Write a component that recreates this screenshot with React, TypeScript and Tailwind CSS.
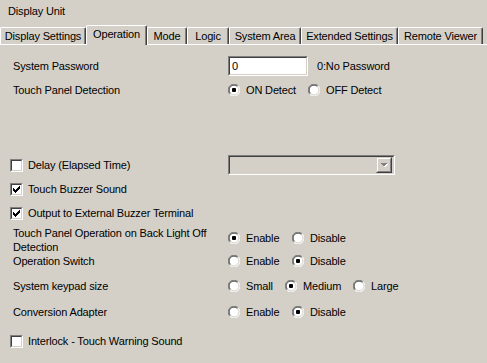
import React from 'react';

const tabs = [
  { label: 'Display Settings', w: 'w-[86px]' },
  { label: 'Operation', w: 'w-[61px]', active: true },
  { label: 'Mode', w: 'w-[40px]' },
  { label: 'Logic', w: 'w-[42px]' },
  { label: 'System Area', w: 'w-[72px]' },
  { label: 'Extended Settings', w: 'w-[97px]' },
  { label: 'Remote Viewer', w: 'w-[85px]' },
];

// classic sunken 3D frame
function Sunken({ className, inner, children }: { className: string; inner: string; children?: React.ReactNode }) {
  return (
    <div className={`border border-t-[#808080] border-l-[#808080] border-b-white border-r-white ${className}`}>
      <div className={`h-full w-full border border-t-[#404040] border-l-[#404040] border-b-[#d4d0c8] border-r-[#d4d0c8] ${inner}`}>
        {children}
      </div>
    </div>
  );
}

function Check({ checked, label }: { checked?: boolean; label: string }) {
  return (
    <div className="flex h-[13px] items-center">
      <Sunken className="h-[13px] w-[13px] shrink-0" inner="bg-white flex items-center justify-center">
        {checked && (
          <svg width="7" height="7" viewBox="0 0 7 7" shapeRendering="crispEdges">
            <path d="M0 2 L2 4 L6 0 L7 0 L7 3 L2 7 L0 5 Z" fill="#000" />
          </svg>
        )}
      </Sunken>
      <span className="ml-[5px]">{label}</span>
    </div>
  );
}

function Radio({ checked, label, w }: { checked?: boolean; label: string; w: string }) {
  return (
    <div className={`flex h-[12px] items-center ${w}`}>
      <svg width="12" height="12" viewBox="0 0 12 12" className="shrink-0">
        <circle cx="6" cy="6" r="5.5" fill="#fff" />
        <path d="M1.8 10.2 A5.5 5.5 0 0 1 10.2 1.8" fill="none" stroke="#808080" strokeWidth="1" />
        <path d="M10.2 1.8 A5.5 5.5 0 0 1 1.8 10.2" fill="none" stroke="#ffffff" strokeWidth="1" />
        <path d="M2.5 9.5 A4.5 4.5 0 0 1 9.5 2.5" fill="none" stroke="#404040" strokeWidth="1" />
        <path d="M9.5 2.5 A4.5 4.5 0 0 1 2.5 9.5" fill="none" stroke="#d4d0c8" strokeWidth="1" />
        {checked && <rect x="4" y="4" width="4" height="4" rx="1" fill="#000" />}
      </svg>
      <span className="ml-[6px]">{label}</span>
    </div>
  );
}

export default function App() {
  return (
    <div className="h-[363px] w-[487px] overflow-hidden bg-[#d4d0c8] font-['Liberation_Sans',Arial,sans-serif] text-[11px] leading-[13px] tracking-[-0.15px] text-black">
      <div className="h-[25px] pl-[8px] pt-[5px]">Display Unit</div>

      {/* tab strip */}
      <div className="flex h-[19px] items-end">
        {tabs.map((t) => (
          <div
            key={t.label}
            className={`${t.w} flex items-center justify-center whitespace-nowrap rounded-t-[2px] border-l border-t border-r border-l-white border-t-white border-r-[#404040] shadow-[inset_-1px_0_0_#808080] ${
              t.active ? 'relative z-10 -mb-px h-[20px] bg-[#d4d0c8] pb-[3px]' : 'h-[17px]'
            }`}
          >
            {t.label}
          </div>
        ))}
      </div>

      {/* tab page */}
      <div className="border-t border-t-white pl-[10px]">
        <div className="mt-[11px] flex h-[20px] items-center">
          <div className="ml-[3px] w-[215px]">System Password</div>
          <Sunken className="h-[20px] w-[80px]" inner="bg-white pl-[2px] flex items-center">0</Sunken>
          <span className="ml-[9px]">0:No Password</span>
        </div>

        <div className="mt-[8px] flex h-[12px] items-center">
          <div className="ml-[3px] w-[215px]">Touch Panel Detection</div>
          <Radio checked label="ON Detect" w="w-[80px]" />
          <Radio label="OFF Detect" w="w-[80px]" />
        </div>

        <div className="mt-[59px] flex h-[20px] items-center">
          <div className="w-[218px]">
            <Check label="Delay (Elapsed Time)" />
          </div>
          <Sunken className="h-[20px] w-[167px]" inner="bg-[#d4d0c8] flex justify-end items-center pr-[1px]">
            <div className="h-[16px] w-[16px] border border-t-[#d4d0c8] border-l-[#d4d0c8] border-b-[#404040] border-r-[#404040]">
              <div className="flex h-full w-full items-center justify-center border border-t-white border-l-white border-b-[#808080] border-r-[#808080]">
                <svg width="8" height="5" viewBox="0 0 8 5" shapeRendering="crispEdges">
                  <path d="M1 1 H8 L4.5 4.5 Z" fill="#fff" />
                  <path d="M0 0 H7 L3.5 3.5 Z" fill="#808080" />
                </svg>
              </div>
            </div>
          </Sunken>
        </div>

        <div className="mt-[8px]">
          <Check checked label="Touch Buzzer Sound" />
        </div>
        <div className="mt-[11px]">
          <Check checked label="Output to External Buzzer Terminal" />
        </div>

        <div className="mt-[6px] flex items-start">
          <div className="ml-[3px] w-[215px] leading-[14px]">
            Touch Panel Operation on Back Light Off
            <br />
            Detection
          </div>
          <div className="mt-[6px] flex">
            <Radio checked label="Enable" w="w-[64px]" />
            <Radio label="Disable" w="w-[64px]" />
          </div>
        </div>

        <div className="mt-[1px] flex h-[12px] items-center">
          <div className="ml-[3px] w-[215px]">Operation Switch</div>
          <Radio label="Enable" w="w-[64px]" />
          <Radio checked label="Disable" w="w-[64px]" />
        </div>

        <div className="mt-[13px] flex h-[12px] items-center">
          <div className="ml-[3px] w-[215px]">System keypad size</div>
          <Radio label="Small" w="w-[57px]" />
          <Radio checked label="Medium" w="w-[68px]" />
          <Radio label="Large" w="w-[64px]" />
        </div>

        <div className="mt-[14px] flex h-[12px] items-center">
          <div className="ml-[3px] w-[215px]">Conversion Adapter</div>
          <Radio label="Enable" w="w-[64px]" />
          <Radio checked label="Disable" w="w-[64px]" />
        </div>

        <div className="mt-[17px]">
          <Check label="Interlock - Touch Warning Sound" />
        </div>
      </div>
    </div>
  );
}
